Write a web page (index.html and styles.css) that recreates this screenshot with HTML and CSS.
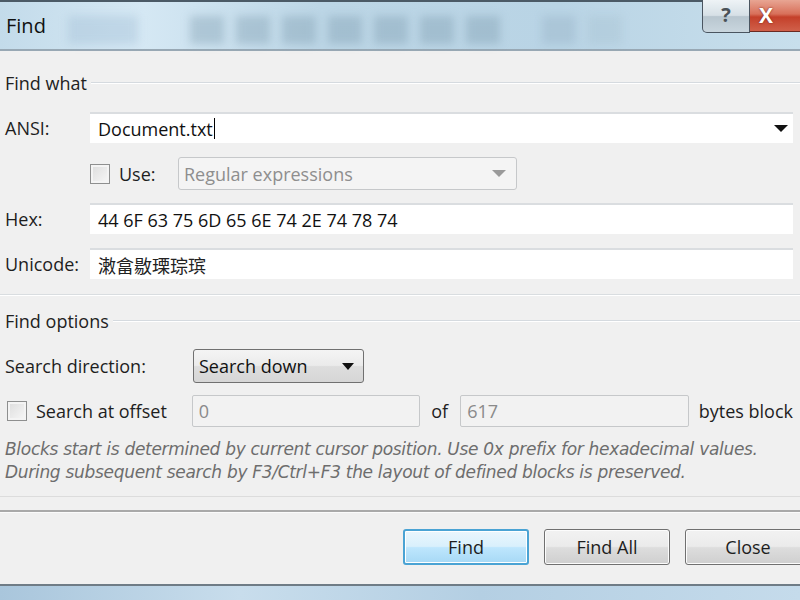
FILE: index.html
```html
<!DOCTYPE html>
<html lang="en">
<head>
    <meta charset="UTF-8">
    <title>Find</title>
    <link rel="stylesheet" href="styles.css">
</head>
<body>
<div class="window">
    <div class="titlebar">
        <span class="title">Find</span>
        <div class="glass">
            <span class="tile wide"></span>
            <span class="tile"></span>
            <span class="tile"></span>
            <span class="tile"></span>
            <span class="tile"></span>
            <span class="tile"></span>
            <span class="tile"></span>
            <span class="tile"></span>
            <span class="tile gap"></span>
            <span class="tile faint"></span>
        </div>
        <div class="caption">
            <div class="cap-help">?</div>
            <div class="cap-close">X</div>
        </div>
    </div>

    <div class="content">
        <div class="group-head"><span>Find what</span></div>

        <div class="row r-ansi">
            <span class="lbl">ANSI:</span>
            <div class="field">Document.txt<span class="cursor"></span><span class="arrow"></span></div>
        </div>

        <div class="row r-use">
            <span class="check"></span>
            <span class="use-lbl">Use:</span>
            <div class="combo-off">Regular expressions<span class="arrow"></span></div>
        </div>

        <div class="row r-hex">
            <span class="lbl">Hex:</span>
            <div class="field">44 6F 63 75 6D 65 6E 74 2E 74 78 74</div>
        </div>

        <div class="row r-uni">
            <span class="lbl">Unicode:</span>
            <div class="field cjk">潄畣敭瑮琮瑸</div>
        </div>

        <div class="sep"></div>

        <div class="group-head"><span>Find options</span></div>

        <div class="row r-dir">
            <span class="dir-lbl">Search direction:</span>
            <div class="combo">Search down<span class="arrow"></span></div>
        </div>

        <div class="row r-off">
            <span class="check small"></span>
            <span class="off-lbl">Search at offset</span>
            <div class="field-off">0</div>
            <span class="of-lbl">of</span>
            <div class="field-off">617</div>
            <span class="bytes-lbl">bytes block</span>
        </div>

        <p class="note">Blocks start is determined by current cursor position. Use 0x prefix for hexadecimal values.<br>During subsequent search by F3/Ctrl+F3 the layout of defined blocks is preserved.</p>
    </div>

    <div class="footer">
        <button class="btn default">Find</button>
        <button class="btn">Find All</button>
        <button class="btn">Close</button>
    </div>
    <div class="frame-bottom"></div>
</div>
</body>
</html>
```

FILE: styles.css
```css
body {
    margin: 0;
    padding: 0;
    font-family: "Open Sans", "Liberation Sans", sans-serif;
    font-size: 18px;
    color: #1e1e1e;
    background: #f0f0f0;
}

.window {
    width: 800px;
    height: 600px;
    overflow: hidden;
    background: #f0f0f0;
    display: flex;
    flex-direction: column;
}

/* title bar */

.titlebar {
    position: relative;
    height: 47px;
    flex: none;
    border-top: 2px solid #4b5a66;
    border-bottom: 2px solid #98a8b4;
    background: linear-gradient(90deg, #c3dbea 0%, #d5e8f4 18%, #bcd6e6 40%, #b9d4e5 70%, #c8dfec 100%);
    display: flex;
    align-items: center;
}

.title {
    font-size: 20px;
    color: #111;
    margin-left: 6px;
    width: 52px;
}

.glass {
    display: flex;
    align-items: center;
    gap: 12px;
    margin-left: 10px;
    margin-top: 8px;
    filter: blur(4px);
}

.tile {
    width: 34px;
    height: 28px;
    background: rgba(120, 150, 170, 0.36);
}

.tile.wide {
    width: 70px;
    background: rgba(150, 180, 205, 0.3);
    margin-right: 40px;
}

.tile.gap {
    margin-left: 30px;
    background: rgba(130, 160, 180, 0.26);
}

.tile.faint {
    background: rgba(150, 175, 190, 0.2);
}

.caption {
    position: absolute;
    top: -2px;
    right: 0;
    display: flex;
}

.cap-help {
    width: 46px;
    height: 32px;
    border: 1px solid #4a5560;
    border-top: none;
    border-radius: 0 0 0 5px;
    background: linear-gradient(#eef3f6 0%, #d6e0e6 48%, #b8c6cf 52%, #c9d6de 100%);
    color: #4a5258;
    font-size: 20px;
    font-weight: bold;
    text-align: center;
    line-height: 30px;
}

.cap-close {
    width: 50px;
    height: 32px;
    border-bottom: 1px solid #6a2a22;
    background: linear-gradient(#e8a593 0%, #d8705a 45%, #c4402a 55%, #d0604a 100%);
    color: #fff;
    font-size: 21px;
    font-weight: bold;
    line-height: 30px;
    padding-left: 9px;
    box-sizing: border-box;
    text-shadow: 0 0 2px #6a1a10;
}

/* content */

.content {
    padding: 0 7px 0 5px;
    flex: none;
}

.group-head {
    height: 26px;
    margin-top: 19px;
    display: flex;
    align-items: center;
    gap: 4px;
    margin-right: -7px;
}

.group-head span {
    color: #222;
}

.group-head::after {
    content: "";
    flex: 1;
    height: 0;
    border-top: 1px solid #d5dadf;
    border-bottom: 1px solid #ffffff;
}

.row {
    display: flex;
    align-items: center;
}

.lbl {
    width: 85px;
    flex: none;
}

.field {
    flex: 1;
    height: 31px;
    box-sizing: border-box;
    background: #fff;
    border-top: 2px solid #dadde0;
    padding-left: 8px;
    display: flex;
    align-items: center;
    color: #111;
}

.field.cjk {
    font-family: "Noto Sans CJK SC", sans-serif;
    font-size: 18px;
    color: #222;
}

.cursor {
    width: 1px;
    height: 21px;
    background: #000;
    margin-left: 1px;
}

.arrow {
    width: 0;
    height: 0;
    border-left: 7px solid transparent;
    border-right: 7px solid transparent;
    border-top: 7px solid #111;
}

.field .arrow {
    margin-left: auto;
    margin-right: 5px;
}

.r-ansi { margin-top: 16px; }
.r-use { margin-top: 14px; height: 33px; }
.r-hex { margin-top: 13px; }
.r-uni { margin-top: 14px; }

.check {
    width: 20px;
    height: 20px;
    box-sizing: border-box;
    border: 1px solid #8e8f8f;
    background: linear-gradient(135deg, #dcdcdc, #f8f8f8);
    box-shadow: inset 0 0 0 2px #f4f4f4;
    margin-left: 85px;
    flex: none;
}

.check.small {
    margin-left: 2px;
}

.use-lbl {
    margin-left: 9px;
    width: 59px;
}

.combo-off {
    width: 339px;
    height: 33px;
    box-sizing: border-box;
    border: 1px solid #c6c8ca;
    border-radius: 3px;
    background: #f4f4f4;
    color: #8e8e8e;
    padding-left: 5px;
    display: flex;
    align-items: center;
}

.combo-off .arrow {
    margin-left: auto;
    margin-right: 10px;
    border-top-color: #9a9a9a;
}

.sep {
    margin: 15px -7px 0 -5px;
    border-top: 1px solid #d9dde0;
    border-bottom: 1px solid #ffffff;
}

.sep + .group-head {
    margin-top: 12px;
}

.r-dir {
    margin-top: 15px;
}

.dir-lbl {
    width: 188px;
}

.combo {
    width: 171px;
    height: 34px;
    box-sizing: border-box;
    border: 1px solid #707070;
    border-radius: 3px;
    background: linear-gradient(#f4f4f4 0%, #ebebeb 48%, #dddddd 52%, #d6d6d6 100%);
    padding-left: 5px;
    display: flex;
    align-items: center;
    color: #111;
}

.combo .arrow {
    margin-left: auto;
    margin-right: 9px;
    border-left-width: 6px;
    border-right-width: 6px;
}

.r-off {
    margin-top: 12px;
}

.off-lbl {
    margin-left: 9px;
    width: 156px;
}

.field-off {
    width: 229px;
    height: 32px;
    box-sizing: border-box;
    border: 1px solid #c6c8ca;
    border-radius: 2px;
    background: #f2f2f2;
    color: #8a8a8a;
    padding-left: 6px;
    display: flex;
    align-items: center;
}

.of-lbl {
    width: 40px;
    padding-left: 11px;
    box-sizing: border-box;
}

.bytes-lbl {
    margin-left: 10px;
    white-space: nowrap;
}

.note {
    margin: 11px 0 0 0;
    font-family: "DejaVu Sans", "Liberation Sans", sans-serif;
    font-size: 17px;
    font-style: italic;
    line-height: 23px;
    color: #6d6d6d;
    white-space: nowrap;
    letter-spacing: -0.3px;
}

/* footer */

.footer {
    flex: none;
    margin-top: 12px;
    border-top: 1px solid #dcdcdc;
    padding-top: 14px;
    height: 73px;
    display: flex;
    align-items: flex-start;
    padding-left: 403px;
    gap: 15px;
    position: relative;
}

.footer::before {
    content: "";
    position: absolute;
    left: 0;
    right: 0;
    top: 13px;
    border-top: 2px solid #a9a9a9;
    border-bottom: 1px solid #fbfbfb;
}

.btn {
    width: 126px;
    height: 36px;
    flex: none;
    margin-top: 18px;
    font-family: "Open Sans", "Liberation Sans", sans-serif;
    font-size: 18px;
    color: #1e1e1e;
    border: 1px solid #707070;
    border-radius: 3px;
    background: linear-gradient(#f2f2f2 0%, #ebebeb 48%, #dddddd 52%, #cfcfcf 100%);
    box-shadow: inset 0 0 0 1px #fcfcfc;
    padding: 0;
}

.btn.default {
    border: 2px solid #4aa3d4;
    background: linear-gradient(#eaf6fd 0%, #d9f0fc 48%, #bee6fd 52%, #a7d9f5 100%);
    box-shadow: inset 0 0 0 1px #fff;
}

.frame-bottom {
    flex: 1;
    border-top: 2px solid #6f7c86;
    background: linear-gradient(90deg, #a9c6dc, #c8ddec 30%, #b4cfe3 60%, #c5dbeb);
}
```
